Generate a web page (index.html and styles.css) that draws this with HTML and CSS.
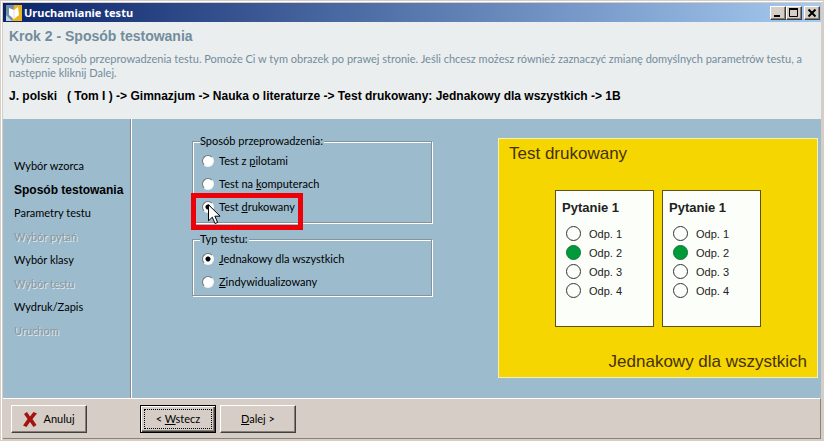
FILE: index.html
```html
<!DOCTYPE html>
<html lang="pl">

<head>
    <meta charset="UTF-8">
    <meta name="viewport" content="width=device-width, initial-scale=1.0">
    <title>Uruchamianie testu</title>
    <link rel="stylesheet" href="styles.css">
</head>

<body>
    <form class="window">
        <div class="titlebar">
            <svg class="app-icon" width="16" height="16" viewBox="0 0 16 16">
                <rect width="16" height="16" fill="#6f8fa6"/>
                <path d="M8 0h8v16H6z" fill="#e9b41c"/>
                <path d="M0 10l6 6H0z" fill="#c3d3dc"/>
                <path d="M3 3l5 2 4-3 1 8-5 4-5-4z" fill="#fff"/>
                <path d="M8 5v8" stroke="#d9dfd8"/>
            </svg>
            <span class="title">Uruchamianie testu</span>
            <button type="button" class="win-button" aria-label="Minimalizuj">
                <svg width="12" height="10" viewBox="0 0 12 10"><path d="M2 8h6" stroke="#000" stroke-width="2"/></svg>
            </button>
            <button type="button" class="win-button" aria-label="Maksymalizuj">
                <svg width="12" height="10" viewBox="0 0 12 10"><path d="M1.500 1v7.500h8V1" fill="none" stroke="#000"/><path d="M1 1h9" stroke="#000" stroke-width="2"/></svg>
            </button>
            <button type="button" class="win-button close" aria-label="Zamknij">
                <svg width="12" height="10" viewBox="0 0 12 10"><path d="M2.500 1.500l7 7M9.500 1.500l-7 7" stroke="#000" stroke-width="2"/></svg>
            </button>
        </div>

        <header>
            <h1>Krok 2 - Sposób testowania</h1>
            <p>Wybierz sposób przeprowadzenia testu. Pomoże Ci w tym obrazek po prawej stronie. Jeśli chcesz możesz również zaznaczyć zmianę domyślnych parametrów testu, a następnie kliknij Dalej.</p>
            <div class="path">J. polski &nbsp; ( Tom I ) -&gt; Gimnazjum -&gt; Nauka o literaturze -&gt; Test drukowany: Jednakowy dla wszystkich -&gt; 1B</div>
        </header>

        <div class="content">
            <ul class="steps">
                <li>Wybór wzorca</li>
                <li class="current">Sposób testowania</li>
                <li>Parametry testu</li>
                <li class="disabled">Wybór pytań</li>
                <li>Wybór klasy</li>
                <li class="disabled">Wybór testu</li>
                <li>Wydruk/Zapis</li>
                <li class="disabled">Uruchom</li>
            </ul>

            <main>
                <div class="options">
                    <fieldset class="mode">
                        <legend>Sposób przeprowadzenia:</legend>
                        <label><input type="radio" name="mode"><span>Test z <u>p</u>ilotami</span></label>
                        <label><input type="radio" name="mode"><span>Test na <u>k</u>omputerach</span></label>
                        <label class="marked">
                            <input type="radio" name="mode" checked><span>Test <u>d</u>rukowany</span>
                            <svg class="cursor" width="13" height="21" viewBox="0 0 13 21">
                                <path d="M.5.8v16l3.800-3.600 2.700 6.300 2.600-1.100-2.700-6.200h5.200z" fill="#fff" stroke="#000"/>
                            </svg>
                        </label>
                    </fieldset>
                    <fieldset class="type">
                        <legend>Typ testu:</legend>
                        <label><input type="radio" name="type" checked><span><u>J</u>ednakowy dla wszystkich</span></label>
                        <label><input type="radio" name="type"><span><u>Z</u>indywidualizowany</span></label>
                    </fieldset>
                </div>

                <div class="preview">
                    <div class="preview-title">Test drukowany</div>
                    <div class="sheets">
                        <div class="sheet">
                            <h2>Pytanie 1</h2>
                            <ul>
                                <li>Odp. 1</li>
                                <li class="picked">Odp. 2</li>
                                <li>Odp. 3</li>
                                <li>Odp. 4</li>
                            </ul>
                        </div>
                        <div class="sheet">
                            <h2>Pytanie 1</h2>
                            <ul>
                                <li>Odp. 1</li>
                                <li class="picked">Odp. 2</li>
                                <li>Odp. 3</li>
                                <li>Odp. 4</li>
                            </ul>
                        </div>
                    </div>
                    <div class="preview-type">Jednakowy dla wszystkich</div>
                </div>
            </main>
        </div>

        <footer>
            <button type="button" class="button cancel">
                <svg width="14" height="15" viewBox="0 0 14 15">
                    <path d="M1 2l3-2 3 4.500L10.500 0 14 1.500 9.500 7l4 6-3 2L7 10l-3.500 5L0 13.500 4.500 7z" fill="#a31410"/>
                </svg>
                Anuluj
            </button>
            <button type="button" class="button default"><span>&lt; <u>W</u>stecz</span></button>
            <button type="button" class="button"><span><u>D</u>alej &gt;</span></button>
        </footer>
    </form>
</body>

</html>
```

FILE: styles.css
```css
*,
*::before,
*::after {
    box-sizing: border-box;
}

body {
    margin: 0;
    background-color: #d6cec6;
    font-family: Lato, "Liberation Sans", sans-serif;
    font-size: 11px;
    line-height: 16px;
    color: #000;
}

h1, h2, p, ul {
    margin: 0;
    padding: 0;
}

ul {
    list-style: none;
}

.window {
    display: flex;
    flex-direction: column;
    min-height: 100vh;
    padding: 2px 2px 1px;
    border: 1px solid #d6cec6;
    box-shadow: inset 1px 1px 0 #fff;
}

/* Title bar */
.titlebar {
    display: flex;
    align-items: center;
    height: 19px;
    padding: 0 1px;
    background: linear-gradient(to right, #0a246a, #a6caf0);
}

.app-icon {
    margin-left: 2px;
}

.title {
    flex: 1;
    margin-left: 2px;
    font-family: "Noto Sans", Tahoma, sans-serif;
    font-weight: bold;
    color: #fff;
}

.win-button {
    display: flex;
    align-items: center;
    justify-content: center;
    width: 16px;
    height: 14px;
    padding: 0;
    background-color: #d6cec6;
    border: 1px solid;
    border-color: #fff #404040 #404040 #fff;
    box-shadow: inset -1px -1px 0 #848078;
}

.close {
    margin-left: 2px;
}

/* Step description */
header {
    height: 97px;
    padding: 5px 16px 0 6px;
    background-color: #eaeeef;
    color: #738c9c;
}

h1 {
    font-family: "Liberation Sans", Arial, sans-serif;
    font-size: 14px;
    line-height: 18px;
}

header p {
    margin-top: 7px;
    line-height: 14px;
}

.path {
    margin-top: 8px;
    font-family: "Liberation Sans", Arial, sans-serif;
    font-size: 12px;
    font-weight: bold;
    color: #000;
    white-space: nowrap;
}

/* Steps and options */
.content {
    display: flex;
    flex: 1;
    background-color: #9cbcce;
}

.steps {
    display: flex;
    flex-direction: column;
    justify-content: space-between;
    width: 129px;
    padding: 39px 0 59px 11px;
    border-right: 1px solid #fff;
    box-shadow: inset -1px 0 0 #848e94;
    white-space: nowrap;
}

.current {
    font-family: "Liberation Sans", Arial, sans-serif;
    font-size: 12px;
    font-weight: bold;
}

.disabled {
    color: #8c969c;
    text-shadow: 1px 1px 0 #dfe8ec;
}

main {
    display: flex;
    flex: 1;
    justify-content: space-between;
    align-items: flex-start;
    padding: 19px 3px 19px 60px;
}

.options {
    width: 240px;
    margin-top: -5px;
}

fieldset {
    min-width: 0;
    margin: 0;
    padding: 0 9px;
    border: 1px solid #84949c;
    box-shadow: 1px 1px 0 #fff, inset 1px 1px 0 #fff;
}

legend {
    padding: 0 1px 0 0;
    margin-left: -2px;
    background-color: #9cbcce;
}

fieldset label {
    position: relative;
    display: flex;
    align-items: center;
    height: 23px;
}

.mode {
    padding-bottom: 4px;
}

.type {
    margin-top: 8px;
    padding-bottom: 2px;
}

input[type="radio"] {
    appearance: none;
    width: 12px;
    height: 12px;
    margin: 0 5px 0 0;
    border: 1px solid;
    border-color: #69757b #eef3f5 #eef3f5 #69757b;
    border-radius: 50%;
    background-color: #fff;
}

input[type="radio"]:checked {
    background-image: radial-gradient(circle, #000 2px, transparent 3px);
}

/* Red frame around the chosen mode */
.marked::after {
    content: "";
    position: absolute;
    top: -2px;
    left: -11px;
    width: 112px;
    height: 37px;
    border: 5px solid #ee0008;
}

.cursor {
    position: absolute;
    top: 9px;
    left: 6px;
    z-index: 1;
}

/* Picture of the printed test */
.preview {
    width: 320px;
    height: 240px;
    padding: 5px 10px;
    background-color: #f5d600;
    border: 1px solid #f4f0b8;
    font-family: "Liberation Sans", Arial, sans-serif;
    color: #46300c;
}

.preview-title,
.preview-type {
    font-size: 17px;
    line-height: 20px;
}

.preview-type {
    margin-top: 25px;
    text-align: right;
}

.sheets {
    display: flex;
    justify-content: center;
    gap: 8px;
    margin-top: 26px;
}

.sheet {
    width: 99px;
    height: 137px;
    padding: 9px 6px;
    background-color: #fcfefa;
    border: 1px solid #5e5018;
    color: #222;
}

.sheet h2 {
    font-size: 13px;
    line-height: 16px;
}

.sheet ul {
    margin-top: 8px;
}

.sheet li {
    display: flex;
    align-items: center;
    gap: 8px;
    height: 19px;
    padding-left: 4px;
}

.sheet li::before {
    content: "";
    width: 15px;
    height: 15px;
    border: 1px solid #333;
    border-radius: 50%;
}

.sheet .picked::before {
    background-color: #009a3a;
    border-color: #0a7a34;
}

/* Bottom buttons */
footer {
    display: flex;
    height: 41px;
    padding: 6px 8px;
    border-top: 1px solid #fff;
    border-bottom: 1px solid #8c8278;
    border-right: 1px solid #8c8278;
}

.button {
    display: flex;
    align-items: center;
    justify-content: center;
    width: 76px;
    height: 28px;
    margin-right: 4px;
    padding: 0;
    font: inherit;
    background-color: #d6cec6;
    border: 1px solid;
    border-color: #fff #404040 #404040 #fff;
    box-shadow: inset -1px -1px 0 #848078;
}

.cancel {
    gap: 6px;
    margin-right: 53px;
}

.default {
    border-color: #000;
    box-shadow: inset 1px 1px 0 #fff, inset -1px -1px 0 #404040, inset -2px -2px 0 #848078;
}

.default span {
    width: 68px;
    border: 1px dotted #000;
    line-height: 18px;
}
```
